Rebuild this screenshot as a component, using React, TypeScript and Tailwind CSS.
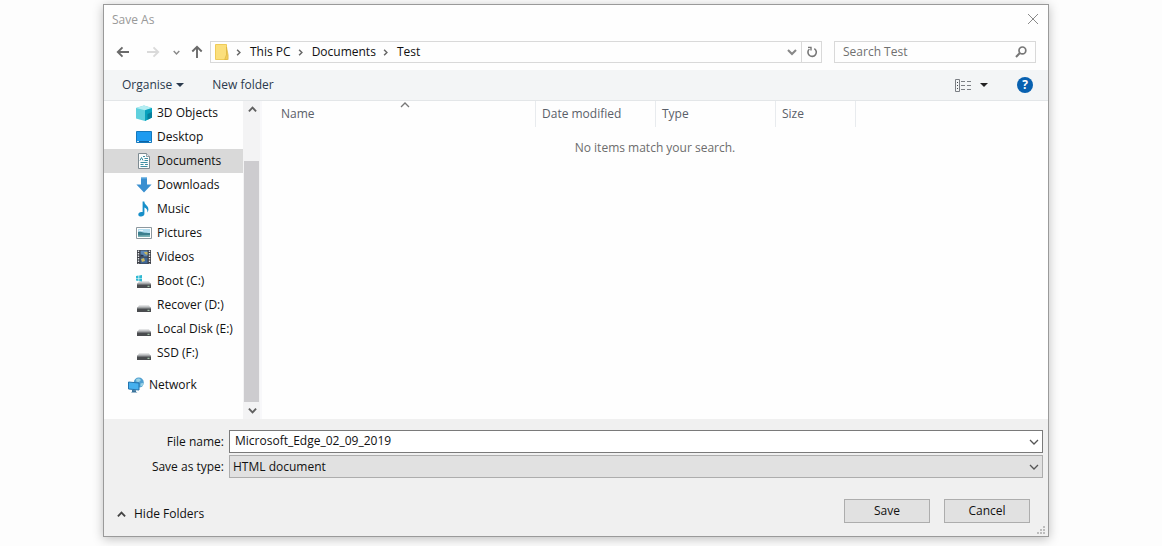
import { useId, useState, type ReactNode } from "react";

type IconProps = { className?: string };

function ArrowLeft({ className }: IconProps) {
  return (
    <svg viewBox="0 0 14 14" className={className} fill="none" stroke="currentColor" strokeWidth="1.9" aria-hidden="true">
      <path d="M13 7H2M6.5 2.3L1.8 7l4.7 4.7" />
    </svg>
  );
}

function Chevron({ className }: IconProps) {
  return (
    <svg viewBox="0 0 10 10" className={className} fill="none" stroke="currentColor" strokeWidth="1.3" aria-hidden="true">
      <path d="M1 3l4 4 4-4" />
    </svg>
  );
}

function BoldChevron({ className }: IconProps) {
  return (
    <svg viewBox="0 0 10 10" className={className} fill="none" stroke="currentColor" strokeWidth="2.1" aria-hidden="true">
      <path d="M1 3l4 4 4-4" />
    </svg>
  );
}

function Caret({ className }: IconProps) {
  return (
    <svg viewBox="0 0 8 4" className={className} fill="currentColor" aria-hidden="true">
      <path d="M0 0h8L4 4z" />
    </svg>
  );
}

function CloseIcon() {
  return (
    <svg viewBox="0 0 12 12" className="size-3" fill="none" stroke="currentColor" strokeWidth="1" aria-hidden="true">
      <path d="M1 1l10 10M11 1L1 11" />
    </svg>
  );
}

function FolderIcon() {
  return (
    <svg viewBox="0 0 14 16" className="h-4 w-[14px]" aria-hidden="true">
      <path d="M.5.5h11v15H.5z" fill="#fbdf7c" stroke="#efcb58" />
      <path d="M11.5 3l1.6 8v4.5h-3.4l1.8-5z" fill="#f2cd5c" stroke="#ddb440" strokeWidth=".7" />
    </svg>
  );
}

function RefreshIcon() {
  return (
    <svg viewBox="0 0 12 12" className="size-3" fill="none" stroke="currentColor" strokeWidth="1.6" aria-hidden="true">
      <path d="M8.3 2.6A4.2 4.2 0 1 1 3.4 3" />
      <path d="M2 1.4h3v3.2" strokeWidth="1.4" />
    </svg>
  );
}

function SearchIcon() {
  return (
    <svg viewBox="0 0 12 12" className="size-3" fill="none" stroke="currentColor" aria-hidden="true">
      <circle cx="7.4" cy="4.4" r="3.4" strokeWidth="1.7" />
      <path d="M4.9 7L1 11" strokeWidth="2" />
    </svg>
  );
}

function ViewIcon() {
  return (
    <svg viewBox="0 0 17 13" className="h-[13px] w-[17px]" fill="none" stroke="#7b7f84" aria-hidden="true">
      <path d="M.5.5h4v12h-4z" />
      <path d="M2 3.5h1M2 6.5h1M2 9.5h1" stroke="#43474c" />
      <path d="M6 2.5h4M6 6.5h4M6 10.5h4M12 2.5h4M12 6.5h4M12 10.5h4" />
    </svg>
  );
}

function ObjectsIcon() {
  return (
    <svg viewBox="0 0 16 16" className="size-4" aria-hidden="true">
      <path d="M0 3l8-2.6L16 3v9.6L9 16l-9-2.6z" fill="#5fd0dd" />
      <path d="M0 3l9 2.2L16 3 8 .4z" fill="#b5edf2" />
      <path d="M9 5.2L16 3v9.6L9 16z" fill="#08a1bd" />
      <path d="M11.5 9l4.5-2v5.6l-4.5 2.2z" fill="#067f9c" />
    </svg>
  );
}

function DesktopIcon() {
  return (
    <svg viewBox="0 0 16 16" className="size-4" aria-hidden="true">
      <path d="M.5 2.5h15v11H.5z" fill="#1e9bf0" stroke="#1478bd" />
      <path d="M1 12.5h14" stroke="#0d63a5" />
      <path d="M1 12.5h2M13 12.5h2" stroke="#d4ecfb" />
    </svg>
  );
}

function DocumentIcon() {
  return (
    <svg viewBox="0 0 16 16" className="size-4" aria-hidden="true">
      <path d="M2.5.5h8l3 3v12h-11z" fill="#fafcfc" stroke="#7e8b92" />
      <path d="M10.5.5v3h3" fill="#dce6ea" stroke="#7e8b92" strokeWidth=".8" />
      <path d="M7 3.5h2M4.5 9.5h7M4.5 11.5h3M9 11.5h3M4.5 13.5h7M8.500 5.500H12" stroke="#3f8fa3" />
      <path d="M4 7.500l1.500-3L7 7.500M8.500 7.500H12" fill="none" stroke="#3a8da0" />
    </svg>
  );
}

function DownloadIcon() {
  return (
    <svg viewBox="0 0 16 16" className="size-4" aria-hidden="true">
      <path d="M5 .5h6v7h4.600L8 15.600.4 7.500H5z" fill="#3a8fd0" />
      <path d="M5 .5h6v1H5z" fill="#6fb4e5" />
    </svg>
  );
}

function MusicIcon() {
  return (
    <svg viewBox="0 0 16 16" className="size-4" aria-hidden="true">
      <path d="M6.600.4h1.700c.3 2.600 1.800 3.400 3 4.800 1.600 1.900 1.400 4.400.1 6.200.2-2.500-.9-4.100-3-4.800v6.200c0 1.700-1.600 2.800-3.300 2.800S2.300 14.700 2.300 13.400s1.300-2.500 3-2.500c.5 0 .9.100 1.300.2z" fill="#178fc9" />
    </svg>
  );
}

function PictureIcon() {
  return (
    <svg viewBox="0 0 16 16" className="size-4" aria-hidden="true">
      <path d="M.5 2.500h15v11H.5z" fill="#fff" stroke="#8d989e" />
      <path d="M2 4h12v8H2z" fill="#b4def0" />
      <path d="M2 7c3-1 5 1 12 1v4H2z" fill="#3c7f8e" />
      <path d="M2 10.500l12-.5v2H2z" fill="#78b0b3" />
      <path d="M3 5.500h4" stroke="#e9f7fc" />
    </svg>
  );
}

function VideoIcon() {
  return (
    <svg viewBox="0 0 16 16" className="size-4" aria-hidden="true">
      <path d="M1 1h14v14H1z" fill="#3c3f46" />
      <path d="M2.500 1.500v13M13.500 1.500v13" stroke="#dfe3e6" strokeWidth="1.400" strokeDasharray="1.500 1" />
      <path d="M4.500 1.500h7v6h-7z" fill="#5c86b5" />
      <path d="M4.500 8.500h7v6h-7z" fill="#3f6796" />
      <path d="M8 3h3.500v3L9 5zM5 10l3-1 1 3-3 1z" fill="#c9b65d" />
      <path d="M4.500 5.500l3 .5v1.500h-3z" fill="#27344a" />
    </svg>
  );
}

function DriveShape() {
  return (
    <>
      <path d="M3 8.500h10l2 2.500H1z" fill="#c6c8ca" />
      <path d="M1 10.800h14V15H1z" fill="#4a4c4f" />
      <path d="M1 10.800h14v1H1z" fill="#7d8083" />
      <path d="M11.500 13.300h2" stroke="#b8e0bd" />
    </>
  );
}

function DriveIcon() {
  return (
    <svg viewBox="0 0 16 16" className="size-4" aria-hidden="true">
      <DriveShape />
    </svg>
  );
}

function BootDriveIcon() {
  return (
    <svg viewBox="0 0 16 16" className="size-4" aria-hidden="true">
      <DriveShape />
      <path d="M0 3l2.500-.4v2.300H0zM3.200 2.500L6 2v2.900H3.200zM0 5.600h2.500v2.300L0 7.500zM3.200 5.600H6v2.900L3.200 8z" fill="#2fb9d2" />
    </svg>
  );
}

function NetworkIcon() {
  return (
    <svg viewBox="0 0 16 16" className="size-4" aria-hidden="true">
      <circle cx="10.800" cy="5.600" r="5" fill="#4f9fd0" />
      <path d="M8 2.500c2-1.700 4-1 5 .5l-2 2-2.500-.3zM12.500 6.500l3-.8-1 3.300-2 .6z" fill="#9bd3e6" />
      <path d="M.5 5l10.500 1v7L.5 12z" fill="#46b0ee" stroke="#2374ae" />
      <path d="M4 13l4 .3v1.500l1.500.7H3l1-.8z" fill="#39739b" />
    </svg>
  );
}

const places: { name: string; icon: ReactNode }[] = [
  { name: "3D Objects", icon: <ObjectsIcon /> },
  { name: "Desktop", icon: <DesktopIcon /> },
  { name: "Documents", icon: <DocumentIcon /> },
  { name: "Downloads", icon: <DownloadIcon /> },
  { name: "Music", icon: <MusicIcon /> },
  { name: "Pictures", icon: <PictureIcon /> },
  { name: "Videos", icon: <VideoIcon /> },
  { name: "Boot (C:)", icon: <BootDriveIcon /> },
  { name: "Recover (D:)", icon: <DriveIcon /> },
  { name: "Local Disk (E:)", icon: <DriveIcon /> },
  { name: "SSD (F:)", icon: <DriveIcon /> },
];

function TitleBar() {
  return (
    <header className="flex h-9 items-start justify-between pr-2 pl-2">
      <h1 className="pt-1.5 text-[#999]">Save As</h1>
      <button type="button" aria-label="Close" className="pt-2 pr-px text-[#8a8a8a]">
        <CloseIcon />
      </button>
    </header>
  );
}

function AddressRow() {
  const crumbs = ["This PC", "Documents", "Test"];
  return (
    <div className="flex h-[29px] items-start pr-3">
      <nav aria-label="History" className="flex h-[22px] w-[106px] shrink-0 items-center pl-3">
        <button type="button" aria-label="Back" className="w-[30px] text-[#6a6a6a]">
          <ArrowLeft className="size-[14px]" />
        </button>
        <button type="button" aria-label="Forward" className="w-[27px] text-[#dadada]">
          <ArrowLeft className="size-[14px] rotate-180" />
        </button>
        <button type="button" aria-label="Recent locations" className="w-[17px] text-[#888]">
          <BoldChevron className="size-[7px]" />
        </button>
        <button type="button" aria-label="Up" className="text-[#6a6a6a]">
          <ArrowLeft className="size-[14px] rotate-90" />
        </button>
      </nav>
      <div className="flex h-[22px] min-w-0 flex-1 items-center border border-[#d9d9d9]">
        <span className="pl-1">
          <FolderIcon />
        </span>
        <ol className="flex flex-1 items-center gap-1.5 pl-1.5">
          {crumbs.map((crumb) => (
            <li key={crumb} className="flex items-center gap-2">
              <BoldChevron className="size-[7px] -rotate-90 text-[#666]" />
              <a href="#" className="whitespace-nowrap">{crumb}</a>
            </li>
          ))}
        </ol>
        <button type="button" aria-label="Previous locations" className="pr-1 text-[#888]">
          <BoldChevron className="size-[10px]" />
        </button>
        <button type="button" aria-label="Refresh" className="flex h-full w-5 items-center justify-center border-l border-[#d9d9d9] text-[#777]">
          <RefreshIcon />
        </button>
      </div>
      <div className="ml-3 flex h-[22px] w-[202px] shrink-0 items-center border border-[#d9d9d9] pr-2 pl-2 text-[#777]">
        <input
          type="search"
          aria-label="Search Test"
          placeholder="Search Test"
          className="min-w-0 flex-1 bg-transparent outline-none placeholder:text-[#707070]"
        />
        <SearchIcon />
      </div>
    </div>
  );
}

function Toolbar() {
  return (
    <div className="flex h-[31px] items-center border-b border-[#e3e6e8] bg-[#f3f5f6] pr-[15px] pl-[18px] text-[#2b3a4d]">
      <button type="button" className="flex items-center gap-1">
        Organise
        <Caret className="h-1 w-2" />
      </button>
      <button type="button" className="ml-7">New folder</button>
      <button type="button" aria-label="Change view" className="ml-auto">
        <ViewIcon />
      </button>
      <button type="button" aria-label="More view options" className="ml-2 text-[#222]">
        <Caret className="h-1 w-2" />
      </button>
      <button
        type="button"
        aria-label="Help"
        className="ml-[29px] flex size-4 items-center justify-center rounded-full bg-[#0861b0] font-bold text-white"
      >
        ?
      </button>
    </div>
  );
}

function PlacesPane() {
  const [selected, setSelected] = useState("Documents");
  return (
    <div className="flex w-[158px] shrink-0 border-r-2 border-[#f8f8fa]">
      <nav aria-label="Places" className="flex-1 pb-[22px]">
        <ul>
          {places.map(({ name, icon }) => (
            <li key={name}>
              <button
                type="button"
                onClick={() => setSelected(name)}
                className={`flex h-6 w-full items-center gap-[5px] pl-8 text-left whitespace-nowrap ${selected === name ? "bg-[#d9d9d9]" : ""}`}
              >
                {icon}
                {name}
              </button>
            </li>
          ))}
          <li className="mt-2">
            <button type="button" className="flex h-6 w-full items-center gap-[5px] pl-6 text-left">
              <NetworkIcon />
              Network
            </button>
          </li>
        </ul>
      </nav>
      <div className="flex w-[17px] flex-col bg-[#f3f3f4] pl-px text-[#606060]">
        <button type="button" aria-label="Scroll up" className="flex h-[17px] items-center justify-center">
          <BoldChevron className="size-[9px] rotate-180" />
        </button>
        <div className="flex flex-1 flex-col justify-end">
          <div className="h-[85%] w-[15px] bg-[#cdcccf]" />
        </div>
        <button type="button" aria-label="Scroll down" className="flex h-[17px] items-center justify-center">
          <BoldChevron className="size-[9px]" />
        </button>
      </div>
    </div>
  );
}

function FileList() {
  const headings = [
    { label: "Date modified", width: "w-[120px]" },
    { label: "Type", width: "w-[120px]" },
    { label: "Size", width: "w-20" },
  ];
  return (
    <div className="min-w-0 flex-1">
      <table className="w-full table-fixed border-separate border-spacing-0">
        <thead>
          <tr className="h-[26px] text-left text-[#5a6069]">
            <th scope="col" aria-sort="ascending" className="relative w-[274px] border-r border-[#e8ebee] p-0 pl-[19px] font-normal">
              <Chevron className="absolute -top-px left-[138px] size-[10px] rotate-180 text-[#777]" />
              Name
            </th>
            {headings.map(({ label, width }) => (
              <th key={label} scope="col" className={`${width} border-r border-[#e8ebee] p-0 pl-1.5 font-normal`}>
                {label}
              </th>
            ))}
            <td className="p-0" />
          </tr>
        </thead>
        <tbody>
          <tr>
            <td colSpan={5} className="p-0 pt-3 text-center text-[#6d6d6d]">
              No items match your search.
            </td>
          </tr>
        </tbody>
      </table>
    </div>
  );
}

function SaveForm() {
  const id = useId();
  return (
    <form className="bg-[#f0f0f0]" onSubmit={(event) => event.preventDefault()}>
      <div className="grid grid-cols-[120px_1fr] items-center gap-x-[5px] gap-y-0.5 pt-[11px] pr-[5px]">
        <label htmlFor={`${id}-name`} className="text-right">File name:</label>
        <div className="relative">
          <input
            id={`${id}-name`}
            type="text"
            defaultValue="Microsoft_Edge_02_09_2019"
            className="block h-[23px] w-full border border-[#7a7a7a] bg-white pr-5 pb-0.5 pl-[5px] outline-none"
          />
          <Chevron className="pointer-events-none absolute top-[7px] right-1 size-[10px] text-[#555]" />
        </div>
        <label htmlFor={`${id}-type`} className="text-right">Save as type:</label>
        <div className="relative">
          <select
            id={`${id}-type`}
            className="block h-[23px] w-full appearance-none border border-[#adadad] bg-[#e1e1e1] pr-5 pl-[3px] outline-none"
          >
            <option>HTML document</option>
          </select>
          <Chevron className="pointer-events-none absolute top-[7px] right-1 size-[10px] text-[#555]" />
        </div>
      </div>
      <div className="flex items-start pt-[21px] pr-[18px] pl-[13px]">
        <button type="button" className="mt-1.5 flex items-center gap-2">
          <BoldChevron className="size-[9px] rotate-180 text-[#444]" />
          Hide Folders
        </button>
        <div className="ml-auto flex gap-3.5">
          <button type="submit" className="h-6 w-[86px] border border-[#adadad] bg-[#e1e1e1]">Save</button>
          <button type="button" className="h-6 w-[86px] border border-[#adadad] bg-[#e1e1e1]">Cancel</button>
        </div>
      </div>
      <div className="flex h-[13px] items-end justify-end pr-[3px] pb-0.5">
        <svg viewBox="0 0 8 8" className="size-2" fill="#bdbdbd" aria-hidden="true">
          <path d="M6 0h2v2H6zM3 3h2v2H3zM6 3h2v2H6zM0 6h2v2H0zM3 6h2v2H3zM6 6h2v2H6z" />
        </svg>
      </div>
    </form>
  );
}

export default function App() {
  return (
    <div className="min-h-screen bg-[#fdfdfd] pt-1 pr-[113px] pb-2 pl-[103px] font-['Open_Sans','Noto_Sans',sans-serif] text-[12px] leading-[18px] text-[#111]">
      <main className="border border-[#9a9a9a] bg-[#fefefe] shadow-[0_2px_10px_rgba(0,0,0,0.25)]">
        <TitleBar />
        <AddressRow />
        <Toolbar />
        <div className="flex">
          <PlacesPane />
          <FileList />
        </div>
        <SaveForm />
      </main>
    </div>
  );
}
